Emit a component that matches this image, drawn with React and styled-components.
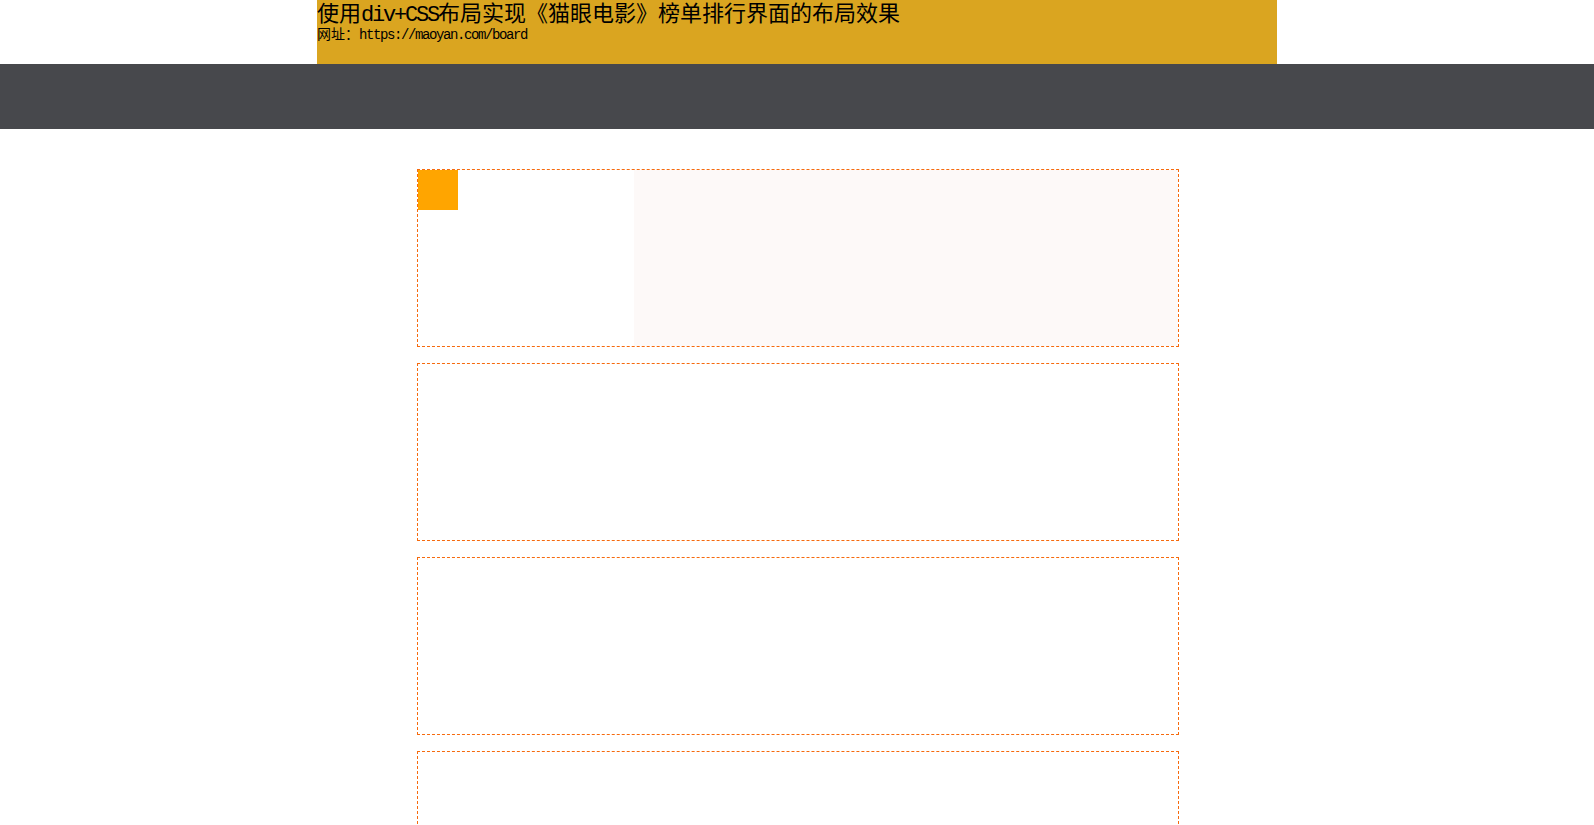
import React from "react";
import styled, { createGlobalStyle } from "styled-components";

const GlobalStyle = createGlobalStyle`
  body {
    margin: 0;
    background: #fff;
    font-family: "Liberation Serif", "Noto Sans CJK SC", serif;
    color: #000;
  }
`;

const Header = styled.header`
  width: 960px;
  height: 64px;
  margin: 0 auto;
  background: goldenrod;
`;

const Title = styled.h1`
  margin: 0;
  font-size: 22px;
  line-height: 22px;
  font-weight: normal;
  font-family: "Noto Sans CJK SC", sans-serif;
  white-space: nowrap;
`;

const Url = styled.p`
  margin: 0;
  font-size: 14px;
  line-height: 12px;
  font-family: "Noto Sans CJK SC", sans-serif;
  white-space: nowrap;
`;

const Latin = styled.span`
  font-family: "Liberation Mono", monospace;
  letter-spacing: ${(p) => p.$squeeze}px;
`;

const NavBar = styled.nav`
  height: 65px;
  background: #47484c;
`;

const Board = styled.main`
  width: 764px;
  margin: 40px auto 0;
  display: flex;
  flex-direction: column;
  align-items: flex-end;
  gap: 16px;
`;

const Card = styled.div`
  width: 760px;
  height: 176px;
  border: 1px dashed #f66a0d;
  display: flex;
`;

const Poster = styled.div`
  width: 216px;
  flex: none;
`;

const Rank = styled.div`
  width: 40px;
  height: 40px;
  background: orange;
`;

const Info = styled.div`
  flex: 1;
  background: #fdf9f8;
`;

const movies = [1, 2, 3, 4, 5];

const App = () => {
  return (
    <>
      <GlobalStyle />
      <Header>
        <Title>
          使用<Latin $squeeze={-2.2}>div+CSS</Latin>布局实现《猫眼电影》榜单排行界面的布局效果
        </Title>
        <Url>
          网址：<Latin $squeeze={-1.4}>https://maoyan.com/board</Latin>
        </Url>
      </Header>
      <NavBar />
      <Board>
        {movies.map((m) => (
          <Card key={m}>
            {m === 1 && (
              <>
                <Poster>
                  <Rank />
                </Poster>
                <Info />
              </>
            )}
          </Card>
        ))}
      </Board>
    </>
  );
};

export default App;
